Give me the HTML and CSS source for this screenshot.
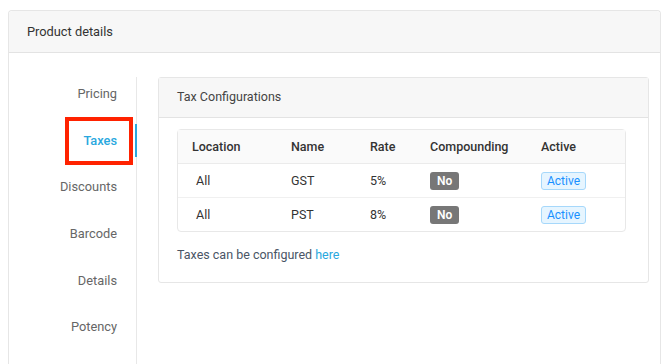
FILE: index.html
```html
<!DOCTYPE html>
<html lang="en">
<head>
    <meta charset="UTF-8">
    <meta name="viewport" content="width=device-width, initial-scale=1.0">
    <title>Product details</title>
    <link rel="stylesheet" href="styles.css">
</head>
<body>

<div class="card">
    <div class="card-header">Product details</div>
    <div class="card-body">
        <nav class="side-nav">
            <a class="nav-item">Pricing</a>
            <a class="nav-item active">Taxes</a>
            <a class="nav-item">Discounts</a>
            <a class="nav-item">Barcode</a>
            <a class="nav-item">Details</a>
            <a class="nav-item">Potency</a>
        </nav>

        <div class="content">
            <div class="panel">
                <div class="panel-header">Tax Configurations</div>
                <div class="panel-body">
                    <table class="tax-table">
                        <colgroup>
                            <col style="width: 99px">
                            <col style="width: 79px">
                            <col style="width: 60px">
                            <col style="width: 111px">
                            <col>
                        </colgroup>
                        <thead>
                            <tr>
                                <th>Location</th>
                                <th>Name</th>
                                <th>Rate</th>
                                <th>Compounding</th>
                                <th>Active</th>
                            </tr>
                        </thead>
                        <tbody>
                            <tr>
                                <td>All</td>
                                <td>GST</td>
                                <td>5%</td>
                                <td><span class="badge badge-no">No</span></td>
                                <td><span class="badge badge-active">Active</span></td>
                            </tr>
                            <tr>
                                <td>All</td>
                                <td>PST</td>
                                <td>8%</td>
                                <td><span class="badge badge-no">No</span></td>
                                <td><span class="badge badge-active">Active</span></td>
                            </tr>
                        </tbody>
                    </table>
                    <p class="note">Taxes can be configured <a class="link">here</a></p>
                </div>
            </div>
        </div>
    </div>
</div>

<div class="highlight"></div>

</body>
</html>
```

FILE: styles.css
```css
html, body {
    height: 100%;
    overflow: hidden;
}

body {
    font-family: Roboto, 'Liberation Sans', sans-serif;
    font-size: 12.5px;
    color: #333;
    background-color: #fff;
    margin: 0;
    padding: 10px 9px 0 8px;
    box-sizing: border-box;
}

.card {
    display: flex;
    flex-direction: column;
    height: 100%;
    box-sizing: border-box;
    border: 1px solid #e6e6e6;
    border-bottom: none;
    border-radius: 4px 4px 0 0;
}

.card-header {
    height: 41px;
    line-height: 42px;
    padding-left: 18px;
    background-color: #f7f7f7;
    border-bottom: 1px solid #e3e3e3;
    border-radius: 4px 4px 0 0;
    font-size: 12.8px;
    color: #333;
}

.card-body {
    flex: 1;
    display: flex;
    padding-top: 24px;
}

.side-nav {
    width: 128px;
    border-right: 1px solid #e8e8e8;
    display: flex;
    flex-direction: column;
    gap: 13.7px;
}

.nav-item {
    display: block;
    height: 33px;
    line-height: 33px;
    text-align: right;
    padding-right: 18px;
    margin-right: -1px;
    border-right: 2px solid transparent;
    color: #666;
    font-size: 12.8px;
}

.nav-item.active {
    color: #2aa8de;
    font-weight: 500;
    border-right-color: #2aa8de;
}

.content {
    flex: 1;
    padding: 0 11px 0 21px;
}

.panel {
    border: 1px solid #e6e6e6;
    border-radius: 3px;
}

.panel-header {
    height: 39px;
    line-height: 38px;
    padding-left: 18px;
    background-color: #f7f7f7;
    border-bottom: 1px solid #e3e3e3;
    color: #444;
}

.panel-body {
    padding: 11px 22px 0 18px;
}

.tax-table {
    width: 449px;
    border: 1px solid #e8e8e8;
    border-radius: 4px;
    border-spacing: 0;
    table-layout: fixed;
}

.tax-table th,
.tax-table td {
    height: 33px;
    padding: 0 0 0 14px;
    text-align: left;
}

.tax-table th {
    background-color: #fafafa;
    font-weight: 500;
    color: #333;
    border-bottom: 1px solid #ebebeb;
}

.tax-table td {
    color: #333;
}

.tax-table td:first-child {
    padding-left: 18px;
}

.tax-table tbody tr:first-child td {
    border-bottom: 1px solid #f0f0f0;
}

.badge {
    display: inline-block;
    height: 18px;
    line-height: 18px;
    border-radius: 3px;
    font-size: 12px;
    padding: 0 6px;
    box-sizing: border-box;
}

.badge-no {
    background-color: #777;
    color: #fff;
    font-weight: 600;
    padding: 0 7px;
}

.badge-active {
    background-color: #e6f5ff;
    border: 1px solid #a6d8fb;
    color: #1890ff;
    line-height: 16px;
    padding: 0 5px;
}

.note {
    margin: 0;
    height: 50px;
    line-height: 46px;
    color: #4a5566;
}

.link {
    color: #2aa8de;
}

.highlight {
    position: absolute;
    left: 65px;
    top: 117px;
    width: 60px;
    height: 40px;
    border: 4px solid #ff2200;
}
```
